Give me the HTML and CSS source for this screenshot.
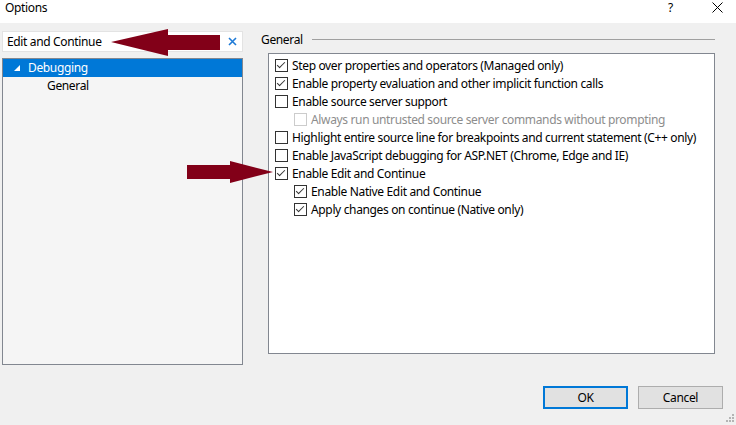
FILE: index.html
```html
<!DOCTYPE html>
<html>
<head>
<meta charset="utf-8">
<link rel="stylesheet" href="styles.css">
</head>
<body>
<div class="dialog">
  <div class="titlebar">
    <span class="title">Options</span>
    <span class="tb-help">?</span>
    <span class="tb-close"><svg width="11" height="11" viewBox="0 0 11 11"><path d="M0.5 0.5L10.5 10.5M10.5 0.5L0.5 10.5" stroke="#000" stroke-width="1" fill="none"/></svg></span>
  </div>
  <div class="main">
    <div class="left">
      <div class="search">
        <span class="search-text">Edit and Continue</span>
        <svg class="search-x" width="9" height="9" viewBox="0 0 9 9"><path d="M1 1L8 8M8 1L1 8" stroke="#1e7ad6" stroke-width="1.6" fill="none"/></svg>
      </div>
      <div class="tree">
        <div class="node selected"><svg class="tri" width="6" height="6" viewBox="0 0 6 6"><path d="M6 0L6 6L0 6Z" fill="#fff"/></svg><span>Debugging</span></div>
        <div class="node child"><span>General</span></div>
      </div>
    </div>
    <div class="right">
      <div class="group-head"><span>General</span><div class="rule"></div></div>
      <div class="group">
        <div class="row"><span class="cb checked"></span>Step over properties and operators (Managed only)</div>
        <div class="row"><span class="cb checked"></span>Enable property evaluation and other implicit function calls</div>
        <div class="row"><span class="cb"></span>Enable source server support</div>
        <div class="row sub disabled"><span class="cb"></span>Always run untrusted source server commands without prompting</div>
        <div class="row"><span class="cb"></span>Highlight entire source line for breakpoints and current statement (C++ only)</div>
        <div class="row"><span class="cb"></span>Enable JavaScript debugging for ASP.NET (Chrome, Edge and IE)</div>
        <div class="row"><span class="cb checked"></span>Enable Edit and Continue</div>
        <div class="row sub"><span class="cb checked"></span>Enable Native Edit and Continue</div>
        <div class="row sub"><span class="cb checked"></span>Apply changes on continue (Native only)</div>
      </div>
    </div>
  </div>
  <div class="footer">
    <button class="btn default">OK</button>
    <button class="btn">Cancel</button>
  </div>
  <svg class="grip" width="10" height="10" viewBox="0 0 10 10" fill="#b4b4b4">
    <rect x="7" y="1" width="2" height="2"/>
    <rect x="4" y="4" width="2" height="2"/><rect x="7" y="4" width="2" height="2"/>
    <rect x="1" y="7" width="2" height="2"/><rect x="4" y="7" width="2" height="2"/><rect x="7" y="7" width="2" height="2"/>
  </svg>
  <svg class="arrow arrow-left" width="110" height="28" viewBox="0 0 110 28"><path d="M0 13L57 0L57 6L109 6L109 21L57 21L57 27Z" fill="#820018"/></svg>
  <svg class="arrow arrow-right" width="87" height="22" viewBox="0 0 87 22"><path d="M0 4L43 4L43 0L86 11L43 22L43 18L0 18Z" fill="#820018"/></svg>
</div>
</body>
</html>
```
FILE: styles.css
```css
* { box-sizing: border-box; }
html, body { margin: 0; padding: 0; }
body {
  width: 736px;
  height: 425px;
  overflow: hidden;
  font-family: "Noto Sans", "Open Sans", sans-serif;
  font-size: 12px;
  letter-spacing: -0.35px;
  color: #000;
  background: #f0f0f0;
}
.dialog {
  position: relative;
  width: 736px;
  height: 425px;
  display: flex;
  flex-direction: column;
}
.titlebar {
  height: 23px;
  background: #fff;
  display: flex;
  align-items: flex-start;
  padding: 0 0 0 5px;
}
.title { flex: 1; font-size: 12px; line-height: 16px; }
.tb-help { width: 14px; margin-right: 30px; font-size: 12px; line-height: 16px; letter-spacing: 0; }
.tb-close { width: 12px; margin: 2px 12px 0 0; display: flex; }
.main {
  display: flex;
  padding: 8px 0 0 2px;
  height: 342px;
}
.left { width: 241px; display: flex; flex-direction: column; }
.search {
  height: 21px;
  background: #fff;
  border: 1px solid #e3e3e3;
  display: flex;
  align-items: center;
  padding: 0 0 0 4px;
}
.search-text { flex: 1; }
.search-x { margin-right: 5px; }
.tree {
  margin-top: 6px;
  height: 308px;
  background: #f5f5f5;
  border: 1px solid #828790;
  padding: 0;
}
.node {
  height: 18px;
  display: flex;
  align-items: center;
}
.node.selected {
  background: #0078d7;
  color: #fff;
}
.tri { margin: 0 8px 0 11px; }
.node.child { padding-left: 44px; }
.right {
  margin-left: 18px;
  width: 454px;
  display: flex;
  flex-direction: column;
}
.group-head {
  display: flex;
  align-items: center;
  height: 16px;
}
.group-head .rule {
  flex: 1;
  margin: 1px 0 0 9px;
  height: 1px;
  background: #a0a0a0;
}
.group {
  margin: 6px 0 0 7px;
  width: 447px;
  height: 301px;
  background: #fff;
  border: 1px solid #828790;
  padding: 2px 0 0 6px;
}
.row {
  height: 18px;
  display: flex;
  align-items: center;
  white-space: nowrap;
}
.row.sub { padding-left: 19px; }
.row.disabled { color: #8d8d8d; }
.cb {
  width: 13px;
  height: 13px;
  border: 1px solid #333;
  background: #fff;
  margin-right: 4px;
  flex: none;
  position: relative;
}
.row.disabled .cb { border-color: #cccccc; }
.cb.checked::after {
  content: "";
  position: absolute;
  left: 3px;
  top: 0px;
  width: 3px;
  height: 7px;
  border-right: 1px solid #333;
  border-bottom: 1px solid #333;
  transform: rotate(45deg);
  transform-origin: center;
}
.footer {
  display: flex;
  justify-content: flex-end;
  padding: 21px 13px 0 0;
  gap: 10px;
}
.btn {
  width: 85px;
  height: 23px;
  background: #e1e1e1;
  border: 1px solid #adadad;
  font-family: inherit;
  font-size: 12px;
  letter-spacing: -0.35px;
  padding: 0;
  color: #000;
}
.btn.default { border: 2px solid #0078d7; }
.grip { position: absolute; right: 1px; bottom: 2px; }
.arrow { position: absolute; }
.arrow-left { left: 111px; top: 29px; }
.arrow-right { left: 187px; top: 161px; }
```
